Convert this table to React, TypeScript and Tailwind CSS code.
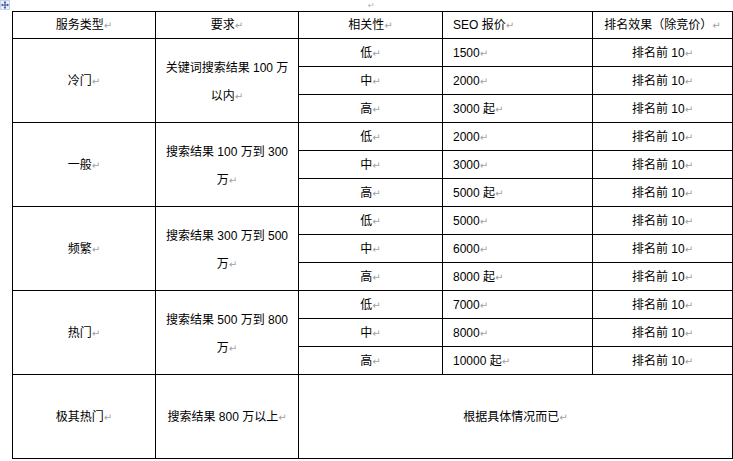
import React from 'react';

const groups = [
  { type: '冷门', req: ['关键词搜索结果 100 万', '以内'], prices: ['1500', '2000', '3000 起'] },
  { type: '一般', req: ['搜索结果 100 万到 300', '万'], prices: ['2000', '3000', '5000 起'] },
  { type: '频繁', req: ['搜索结果 300 万到 500', '万'], prices: ['5000', '6000', '8000 起'] },
  { type: '热门', req: ['搜索结果 500 万到 800', '万'], prices: ['7000', '8000', '10000 起'] },
];

const levels = ['低', '中', '高'];

function Mark() {
  return <span className="text-[10px] text-[#a0a0a0] font-['DejaVu_Sans',sans-serif]">↵</span>;
}

function MoveHandle() {
  return (
    <svg width="10" height="10" viewBox="0 0 10 10" className="absolute left-0 top-0">
      <rect x="0.5" y="0.5" width="9" height="9" fill="#eef2fb" stroke="#c8d0e4" />
      <path d="M5 1.5v7M1.5 5h7" stroke="#3050a0" strokeWidth="1" />
      <path d="M5 1.2L3.6 2.8h2.8zM5 8.8L3.6 7.2h2.8zM1.2 5l1.6-1.4v2.8zM8.8 5L7.2 3.6v2.8z" fill="#3050a0" />
    </svg>
  );
}

const cell = 'border border-black p-0 align-middle';

export default function App() {
  return (
    <div className="relative w-[733px] h-[461px] bg-white text-black text-[12px] font-['Liberation_Sans','Noto_Sans_CJK_SC',sans-serif] overflow-hidden">
      <MoveHandle />
      <div className="h-[11px] leading-[8px] pl-[368px]">
        <span className="text-[8px] text-[#b0b0b0] font-['DejaVu_Sans',sans-serif]">↵</span>
      </div>
      <table className="ml-[12px] table-fixed border-collapse w-[720px]">
        <colgroup>
          <col className="w-[143px]" />
          <col className="w-[143px]" />
          <col className="w-[144px]" />
          <col className="w-[150px]" />
          <col className="w-[140px]" />
        </colgroup>
        <thead>
          <tr className="h-[27px]">
            <th className={`${cell} font-normal text-center`}>服务类型<Mark /></th>
            <th className={`${cell} font-normal text-center`}>要求<Mark /></th>
            <th className={`${cell} font-normal text-center`}>相关性<Mark /></th>
            <th className={`${cell} font-normal text-left pl-[10px]`}>SEO 报价<Mark /></th>
            <th className={`${cell} font-normal text-center`}>排名效果（除竞价）<Mark /></th>
          </tr>
        </thead>
        <tbody>
          {groups.map((g) =>
            levels.map((lv, i) => (
              <tr key={g.type + lv} className="h-[28px]">
                {i === 0 && (
                  <>
                    <td rowSpan={3} className={`${cell} text-center`}>{g.type}<Mark /></td>
                    <td rowSpan={3} className={`${cell} text-center leading-[28px] pt-[3px]`}>
                      {g.req[0]}
                      <br />
                      {g.req[1]}
                      <Mark />
                    </td>
                  </>
                )}
                <td className={`${cell} text-center`}>{lv}<Mark /></td>
                <td className={`${cell} text-left pl-[10px]`}>{g.prices[i]}<Mark /></td>
                <td className={`${cell} text-center`}>排名前 10<Mark /></td>
              </tr>
            ))
          )}
          <tr className="h-[84px]">
            <td className={`${cell} text-center`}>极其热门<Mark /></td>
            <td className={`${cell} text-center`}>搜索结果 800 万以上<Mark /></td>
            <td colSpan={3} className={`${cell} text-center`}>根据具体情况而已<Mark /></td>
          </tr>
        </tbody>
      </table>
    </div>
  );
}
